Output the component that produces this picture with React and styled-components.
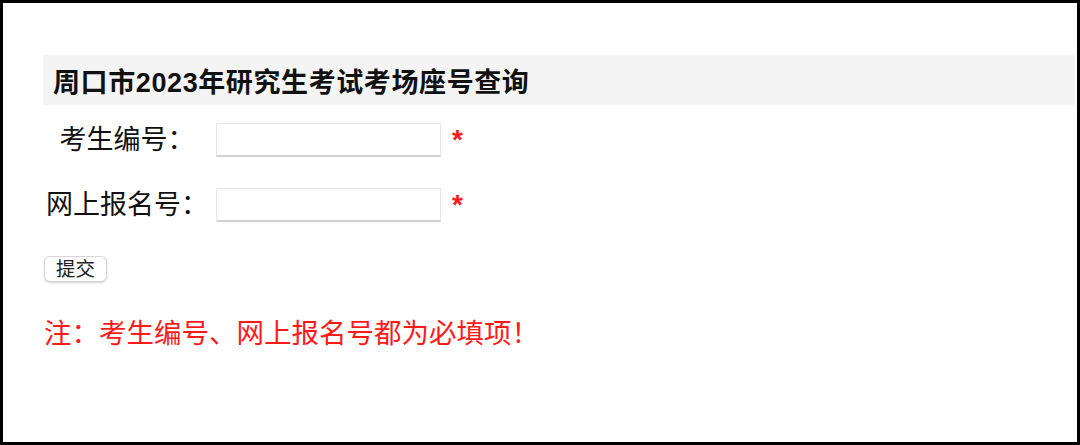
import React from 'react';
import styled, { createGlobalStyle } from 'styled-components';

const GlobalStyle = createGlobalStyle`
	html, body {
		margin: 0;
		padding: 0;
		background: #fff;
	}

	body {
		font-family: "Liberation Sans", "Noto Sans CJK SC", sans-serif;
		color: #111;
	}
`;

const fields = [
	{ id: 'ksbh', label: '考生编号：' },
	{ id: 'bmh', label: '网上报名号：' }
];

/**
 * Exam seat lookup form
 */
const App = () => {
	return (
		<>
			<GlobalStyle />
			<Frame>
				<Title>周口市2023年研究生考试考场座号查询</Title>
				<Form>
					{fields.map((field) => (
						<Row key={field.id}>
							<Label htmlFor={field.id}>{field.label}</Label>
							<Input type="text" id={field.id} name={field.id} />
							<Required>*</Required>
						</Row>
					))}
					<SubmitButton type="button">提交</SubmitButton>
				</Form>
				<Note>注：考生编号、网上报名号都为必填项！</Note>
			</Frame>
		</>
	);
};

export default App;

const Frame = styled.main`
	box-sizing: border-box;
	width: 1080px;
	height: 445px;
	border: 3px solid #000;
	padding: 52px 2px 0 40px;
`;

const Title = styled.h1`
	margin: 0;
	height: 50px;
	display: flex;
	align-items: center;
	padding-left: 10px;
	background: #f4f4f4;
	font-size: 27px;
	font-weight: bold;
	color: #111;
	letter-spacing: 0.6px;
`;

const Form = styled.form`
	display: flex;
	flex-direction: column;
	align-items: flex-start;
	gap: 31px;
	margin-top: 18px;
`;

const Row = styled.div`
	display: flex;
	align-items: center;
	height: 34px;
`;

const Label = styled.label`
	width: 166px;
	margin-left: 1px;
	text-align: center;
	font-size: 27px;
	line-height: 32px;
	color: #111;
	white-space: nowrap;
`;

const Input = styled.input`
	box-sizing: border-box;
	width: 225px;
	height: 34px;
	margin-left: 6px;
	padding: 0 6px;
	border: 1px solid #e6e6e6;
	border-bottom: 2px solid #d2d2d2;
	border-radius: 0;
	background: #fff;
	font-size: 18px;
	outline: none;
`;

const Required = styled.span`
	margin-left: 11px;
	font-size: 28px;
	font-weight: bold;
	line-height: 32px;
	color: #ff1a1a;
	align-self: flex-start;
	margin-top: 1px;
`;

const SubmitButton = styled.button`
	box-sizing: border-box;
	width: 63px;
	height: 26px;
	margin: 3px 0 0 1px;
	padding: 0;
	border: 1px solid #d6d6d6;
	border-radius: 6px;
	background: #fff;
	box-shadow: 0 1px 2px rgba(0, 0, 0, 0.18);
	font-family: "Liberation Sans", "Noto Sans CJK SC", sans-serif;
	font-size: 19.5px;
	line-height: 24px;
	color: #222;
`;

const Note = styled.p`
	margin: 36px 0 0 1px;
	font-size: 27.5px;
	line-height: 32px;
	color: #ff1a1a;
	white-space: nowrap;
`;
